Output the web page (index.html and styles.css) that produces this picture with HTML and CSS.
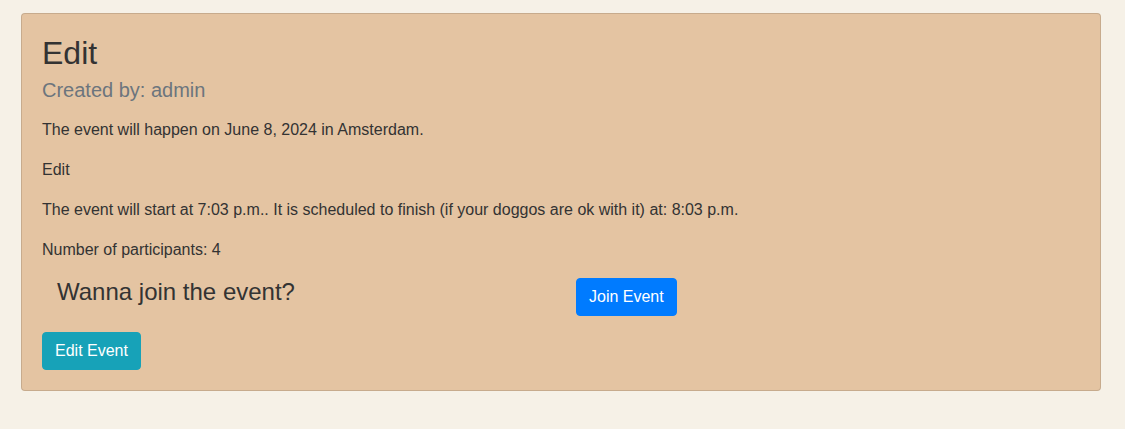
FILE: index.html
```html
<!DOCTYPE html>
<html lang="en">
<head>
<meta charset="utf-8">
<title>Edit</title>
<link rel="stylesheet" href="styles.css">
</head>
<body>
<div class="page">
  <div class="card">
    <div class="card-body">
      <h2 class="card-title">Edit</h2>
      <h5 class="card-subtitle">Created by: admin</h5>
      <p>The event will happen on June 8, 2024 in Amsterdam.</p>
      <p>Edit</p>
      <p>The event will start at 7:03 p.m.. It is scheduled to finish (if your doggos are ok with it) at: 8:03 p.m.</p>
      <p>Number of participants: 4</p>
      <div class="join-row">
        <div class="col">
          <h4 class="join-title">Wanna join the event?</h4>
        </div>
        <div class="col">
          <button class="btn btn-primary" type="button">Join Event</button>
        </div>
      </div>
      <a class="btn btn-info" href="#">Edit Event</a>
    </div>
  </div>
</div>
</body>
</html>
```
FILE: styles.css
```css
* { box-sizing: border-box; }
html, body {
  margin: 0;
  padding: 0;
  background: #f6f1e7;
}
body {
  font-family: "Liberation Sans", Arial, sans-serif;
  font-size: 16px;
  line-height: 1.5;
  color: #333333;
}
.page {
  padding: 13px 24px 0 21px;
}
.card {
  background: #e4c4a2;
  border: 1px solid rgba(0, 0, 0, 0.125);
  border-radius: 4px;
}
.card-body {
  padding: 20px;
}
.card-title {
  margin: 0 0 12px;
  font-size: 32px;
  font-weight: 400;
  line-height: 1.2;
}
.card-subtitle {
  margin: -6px 0 16px;
  font-size: 20px;
  font-weight: 400;
  line-height: 1.2;
  color: #6c757d;
}
p {
  margin: 0 0 16px;
}
.join-row {
  display: flex;
  margin-bottom: 16px;
}
.col {
  flex: 0 0 50%;
  padding: 0 15px;
}
.join-title {
  margin: 0 0 8px;
  font-size: 24px;
  font-weight: 400;
  line-height: 1.2;
}
.btn {
  display: inline-block;
  font-family: inherit;
  font-size: 16px;
  line-height: 1.5;
  padding: 6px 12px;
  border: 1px solid transparent;
  border-radius: 4px;
  color: #fff;
  text-decoration: none;
  cursor: pointer;
}
.btn-primary {
  background: #007bff;
  border-color: #007bff;
}
.btn-info {
  background: #17a2b8;
  border-color: #17a2b8;
}
```
